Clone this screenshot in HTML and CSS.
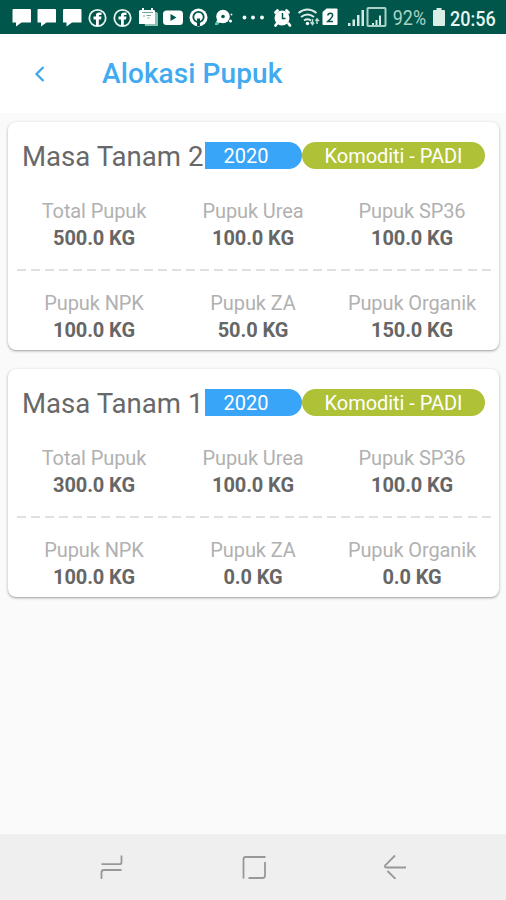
FILE: index.html
```html
<!DOCTYPE html>
<html lang="id">
<head>
<meta charset="utf-8">
<title>Alokasi Pupuk</title>
<link rel="stylesheet" href="styles.css">
</head>
<body>
<div class="screen">
  <div class="status">
    <svg class="status-icons" width="390" height="34" viewBox="0 0 390 34" fill="#fff">
      <defs>
        <path id="bubble" d="M1 9h16.500q1 0 1 1v12.500H9l-5.500 4v-4H0V10q0-1 1-1z"/>
        <g id="fb"><circle cx="0" cy="0" r="8.200" fill="none" stroke="#e4f3ef" stroke-width="1.800"/><path d="M-1.500 8V1.500H-4v-3h2.500V-3Q-1.500-5.500 1.500-5.500H4V-3H2Q1.300-3 1.300-2v.5H4l-.5 3H1.300V8z"/></g>
      </defs>
      <use href="#bubble" x="12.500"/><use href="#bubble" x="37.500"/><use href="#bubble" x="63"/>
      <use href="#fb" x="97.500" y="18"/><use href="#fb" x="122.500" y="18"/>
      <path d="M143 12h13q2 0 2 2v12h-13z" fill="#8fc0b3"/>
      <path d="M140 10h2V8h2v2h7V8h2v2h1q1 0 1 1v13h-16V11z"/>
      <path d="M142 12.500h11M143 16h2m1.500-.5h4.500m-3.500 2.500h2" stroke="#7ba59a" stroke-width="1" fill="none"/>
      <rect x="163" y="10.500" width="20" height="14.500" rx="3.500"/><path d="M170.500 14v7l6-3.500z" fill="#00564a"/>
      <circle cx="198.500" cy="17.500" r="9"/><circle cx="198.500" cy="17" r="5.200" fill="none" stroke="#00564a" stroke-width="1.800"/><path d="M197 18.500h3V26h-3z" fill="#00564a"/>
      <circle cx="223" cy="16.500" r="6.800"/><circle cx="223" cy="16.500" r="1.800" fill="#00564a"/><path d="M217 20l-2 5 6-3z"/><circle cx="217" cy="23.500" r="1.700" fill="#5ec7aa"/><circle cx="230.500" cy="21" r="1.500"/><circle cx="231.500" cy="14.500" r=".9"/>
      <circle cx="244.500" cy="17.500" r="1.900"/><circle cx="253" cy="17.500" r="1.900"/><circle cx="262" cy="17.500" r="1.900"/>
      <circle cx="282" cy="18" r="7.500"/><path d="M275.500 12.500l2-2m11 2l-2-2m-9.500 13l-1.500 2m13-2l1.500 2" stroke="#fff" stroke-width="2.800" stroke-linecap="round"/><path d="M282.500 13v5.500h3" fill="none" stroke="#00564a" stroke-width="1.500"/>
      <g fill="none" stroke="#d9ece7" stroke-width="2"><path d="M298.500 13q9-7 18 0M301 17q6.500-5 13 0M304 20.500q3.500-2.500 7 0"/></g>
      <circle cx="307.500" cy="23.500" r="1.700"/><path d="M312.500 19v5m-2-2l2 2.500 1.500-2M317 24v-5m-1.500 2l1.500-2 2 2" stroke="#b8dfd4" stroke-width="1.500" fill="none"/>
      <path d="M322.500 12l4-3.500h10q1 0 1 1V24q0 1-1 1h-13q-1 0-1-1z"/><path d="M327.800 15.500q.2-2.300 2.500-2.300t2.300 2.200q0 1.500-4.700 6h5" fill="none" stroke="#00564a" stroke-width="1.500"/>
      <g fill="#d4e9e3"><path d="M348 23h2.500v3H348z"/><path d="M352.500 19.500h2.500V26h-2.500zM357 15h2.500v11H357zM361.500 10h2.500v16h-2.500z"/><path d="M372 23h2v3h-2zM375.500 20h2v6h-2zM379 15.500h2V26h-2z"/></g>
      <rect x="367.500" y="8" width="18" height="18" rx=".8" fill="none" stroke="#a9d1c5" stroke-width="2"/>
    </svg>
    <span class="percent">92%</span>
    <svg class="battery" width="12" height="34" viewBox="0 0 12 34" fill="#d8eee6"><path d="M3.500 8h5v2H11q1 0 1 1v14q0 1-1 1H1q-1 0-1-1V11q0-1 1-1h2.500z"/></svg>
    <span class="clock">20:56</span>
  </div>
  <header class="topbar">
    <svg class="back" width="12" height="18" viewBox="0 0 12 18"><path d="M10.500 2L3.500 9l7 7" fill="none" stroke="#3ba6ec" stroke-width="2.200"/></svg>
    <h1>Alokasi Pupuk</h1>
  </header>
  <main class="content">
    <section class="card">
      <div class="head"><h2>Masa Tanam 2</h2><span class="year">2020</span><span class="crop">Komoditi - PADI</span></div>
      <div class="row">
        <div><p>Total Pupuk</p><b>500.0 KG</b></div>
        <div><p>Pupuk Urea</p><b>100.0 KG</b></div>
        <div><p>Pupuk SP36</p><b>100.0 KG</b></div>
      </div>
      <div class="divider"></div>
      <div class="row">
        <div><p>Pupuk NPK</p><b>100.0 KG</b></div>
        <div><p>Pupuk ZA</p><b>50.0 KG</b></div>
        <div><p>Pupuk Organik</p><b>150.0 KG</b></div>
      </div>
    </section>
    <section class="card">
      <div class="head"><h2>Masa Tanam 1</h2><span class="year">2020</span><span class="crop">Komoditi - PADI</span></div>
      <div class="row">
        <div><p>Total Pupuk</p><b>300.0 KG</b></div>
        <div><p>Pupuk Urea</p><b>100.0 KG</b></div>
        <div><p>Pupuk SP36</p><b>100.0 KG</b></div>
      </div>
      <div class="divider"></div>
      <div class="row">
        <div><p>Pupuk NPK</p><b>100.0 KG</b></div>
        <div><p>Pupuk ZA</p><b>0.0 KG</b></div>
        <div><p>Pupuk Organik</p><b>0.0 KG</b></div>
      </div>
    </section>
  </main>
  <nav class="navbar">
    <svg width="26" height="26" viewBox="0 0 26 26"><path d="M2.500 11.200h18q2 0 2-2V2.500M2.500 26v-6.500q0-2.500 2.500-2.500h17.500"/></svg>
    <svg width="26" height="26" viewBox="0 0 26 26"><path d="M2.500 25.500V6q0-2 2-2H24.500M24 9v13.500q0 2.500-2.500 2.500H7.500"/></svg>
    <svg width="26" height="26" viewBox="0 0 26 26"><path d="M13 2.500l-9.500 9.500q-1.500 2 .5 2.500h20M5.500 18l8 8"/></svg>
  </nav>
</div>
</body>
</html>
```
FILE: styles.css
```css
* { box-sizing: border-box; }
body { margin: 0; font-family: Roboto, "Liberation Sans", sans-serif; }
h1, h2, p { margin: 0; font-weight: 400; white-space: nowrap; }
svg { display: block; flex: none; }
.screen { width: 506px; height: 900px; display: flex; flex-direction: column; background: #fafafa; overflow: hidden; }
.status { height: 34px; flex: none; display: flex; align-items: center; background: #00564a; }
.percent { width: 43px; padding: 3px 0 0 3px; font-size: 19.5px; line-height: 34px; color: #a9d3c6; transform: scaleX(.92); transform-origin: left; }
.clock { margin-left: 5px; padding-top: 3px; font-size: 20px; line-height: 34px; font-weight: 500; color: #e8f5f1; transform: scaleX(.9); transform-origin: left; }
.topbar { height: 79px; flex: none; display: flex; align-items: center; padding-left: 33px; background: #fff; }
.topbar h1 { margin-left: 57px; padding-top: 1px; font-size: 28px; line-height: 32px; font-weight: 500; letter-spacing: .1px; color: #42aaf0; }
.content { flex: 1; display: flex; flex-direction: column; gap: 19px; padding: 9px 7px 0 8px; }
.card { height: 228px; padding: 20px 8px 0 7px; border-radius: 8px; background: #fff; box-shadow: 0 1px 3px rgba(0,0,0,.3), 0 1px 1px rgba(0,0,0,.1); }
.head { height: 28px; display: flex; padding-left: 7px; }
.head h2 { width: 183px; font-size: 27.6px; line-height: 30px; color: #686868; }
.year, .crop { height: 27px; line-height: 29px; font-size: 20px; letter-spacing: -.05px; color: #fff; text-align: center; white-space: nowrap; }
.year { width: 97px; padding-right: 15px; border-radius: 0 14px 14px 0; background: #38a5f8; }
.crop { width: 183px; border-radius: 14px; background: #afc136; }
.row { display: grid; grid-template-columns: repeat(3, 159px); margin-left: -.5px; padding-top: 28px; text-align: center; }
.row p { font-size: 20px; line-height: 27px; letter-spacing: -.1px; color: #b1b1b1; }
.row b { display: block; font-size: 20px; line-height: 27px; letter-spacing: -.1px; font-weight: 700; color: #666; }
.divider { height: 2px; margin: 17px 0 0 2px; width: 474px; background: repeating-linear-gradient(90deg, #e0e0e0 0 9px, transparent 9px 14.080px); }
.divider + .row { padding-top: 19px; }
.navbar { height: 66px; flex: none; display: flex; justify-content: space-between; padding: 19px 98px 0 99px; background: #efefef; }
.navbar path { fill: none; stroke: #989898; stroke-width: 1.800; }
```
